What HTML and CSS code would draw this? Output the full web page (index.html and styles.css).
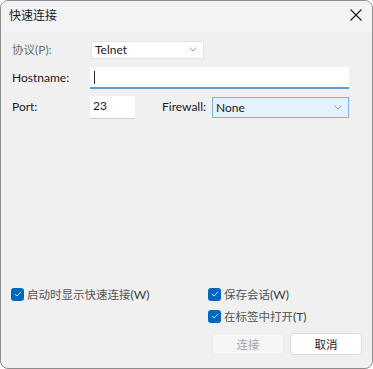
FILE: index.html
```html
<!DOCTYPE html>
<html>
<head>
<meta charset="utf-8">
<link rel="stylesheet" href="styles.css">
</head>
<body>
<div class="window">
  <div class="titlebar">
    <span class="title">快速连接</span>
    <svg class="close" width="12" height="12" viewBox="0 0 12 12"><path d="M0.5 0.5 L11.5 11.5 M11.5 0.5 L0.5 11.5" stroke="#1a1a1a" stroke-width="1.1" fill="none"/></svg>
  </div>
  <div class="body">
    <div class="row r1">
      <span class="label dim"><span class="cjk">协议</span>(P):</span>
      <div class="select proto"><span>Telnet</span><svg class="chev" width="8" height="5" viewBox="0 0 8 5"><path d="M0.5 0.5 L4 4 L7.5 0.5" stroke="#888" fill="none" stroke-width="0.8"/></svg></div>
    </div>
    <div class="row r2">
      <span class="label">Hostname:</span>
      <div class="input host"><span class="caret"></span></div>
    </div>
    <div class="row r3">
      <span class="label">Port:</span>
      <div class="input port">23</div>
      <span class="label fw">Firewall:</span>
      <div class="select fwsel"><span>None</span><svg class="chev" width="8" height="5" viewBox="0 0 8 5"><path d="M0.5 0.5 L4 4 L7.5 0.5" stroke="#888" fill="none" stroke-width="0.8"/></svg></div>
    </div>
    <div class="spacer"></div>
    <div class="checks">
      <div class="col left">
        <label class="check"><span class="box"><svg width="8" height="6" viewBox="0 0 8 6"><path d="M0.8 3 L3 5 L7.2 0.8" stroke="#cfe3f7" fill="none" stroke-width="1"/></svg></span><span class="cjk">启动时显示快速连接</span><span>(W)</span></label>
      </div>
      <div class="col right">
        <label class="check"><span class="box"><svg width="8" height="6" viewBox="0 0 8 6"><path d="M0.8 3 L3 5 L7.2 0.8" stroke="#cfe3f7" fill="none" stroke-width="1"/></svg></span><span class="cjk">保存会话</span><span>(W)</span></label>
        <label class="check"><span class="box"><svg width="8" height="6" viewBox="0 0 8 6"><path d="M0.8 3 L3 5 L7.2 0.8" stroke="#cfe3f7" fill="none" stroke-width="1"/></svg></span><span class="cjk">在标签中打开</span><span>(T)</span></label>
      </div>
    </div>
    <div class="buttons">
      <button class="btn disabled">连接</button>
      <button class="btn">取消</button>
    </div>
  </div>
</div>
</body>
</html>
```
FILE: styles.css
```css
html, body {
  margin: 0;
  padding: 0;
  background: #ffffff;
}
body {
  font-family: "Lato", "Noto Sans CJK SC", sans-serif;
  font-size: 12px;
  color: #1a1a1a;
}
.window {
  box-sizing: border-box;
  width: 373px;
  height: 369px;
  border: 1px solid #8c8c8c;
  border-radius: 8px;
  overflow: hidden;
  display: flex;
  flex-direction: column;
  background: #f0f0f0;
}
.titlebar {
  height: 31px;
  background: #f3f3f6;
  display: flex;
  align-items: center;
  justify-content: space-between;
  padding: 0 10px 0 8px;
  flex: none;
}
.title {
  font-family: "Noto Sans CJK SC", sans-serif;
  font-size: 12px;
  color: #1a1a1a;
  margin-top: -4px;
}
.close {
  margin-top: -4px;
}
.body {
  flex: 1;
  display: flex;
  flex-direction: column;
  padding: 9px 0 13px 0;
}
.row {
  display: flex;
  align-items: center;
}
.label {
  width: 76px;
  padding-left: 11px;
  flex: none;
  line-height: 16px;
}
.cjk {
  font-family: "Noto Sans CJK SC", sans-serif;
  font-size: 11.5px;
}
.dim {
  color: #6d6d6d;
}
.r1 { height: 17px; }
.r2 { height: 22px; margin-top: 9px; }
.r3 { height: 22px; margin-top: 7px; }
.select {
  box-sizing: border-box;
  display: flex;
  align-items: center;
  justify-content: space-between;
  background: #ffffff;
  border: 1px solid #e3e3e3;
  padding: 0 6px 0 3px;
}
.proto {
  width: 113px;
  height: 18px;
  margin-left: 3px;
}
.input {
  box-sizing: border-box;
  background: #ffffff;
  height: 22px;
  display: flex;
  align-items: center;
  padding-left: 3px;
}
.host {
  width: 259px;
  margin-left: 2px;
  border-bottom: 2px solid #5b9bd5;
}
.caret {
  width: 1px;
  height: 13px;
  background: #222;
  margin-left: 1px;
}
.port {
  width: 45px;
  margin-left: 2px;
  box-shadow: 0 1px 0 #d0d0d0;
  align-items: flex-start;
  padding-top: 2px;
}
.fw {
  width: auto;
  padding-left: 27px;
  margin-right: 6px;
}
.fwsel {
  width: 137px;
  height: 21px;
  background: #e5f1fb;
  border: 1px solid #7ab1e6;
  margin-top: 0;
}
.spacer { flex: 1; }
.checks {
  display: flex;
}
.col {
  display: flex;
  flex-direction: column;
  gap: 6px;
}
.left {
  width: 197px;
  padding-left: 10px;
}
.check {
  display: flex;
  align-items: center;
  height: 16px;
  color: #3a3a3a;
}
.check .cjk { color: #555; }
.box {
  box-sizing: border-box;
  width: 13px;
  height: 13px;
  border-radius: 3px;
  background: #0067c0;
  display: flex;
  align-items: center;
  justify-content: center;
  margin-right: 3px;
}
.buttons {
  display: flex;
  justify-content: flex-end;
  gap: 6px;
  padding-right: 10px;
  margin-top: 9px;
}
.btn {
  box-sizing: border-box;
  width: 72px;
  height: 22px;
  font-family: "Noto Sans CJK SC", sans-serif;
  font-size: 11.5px;
  background: #ffffff;
  border: 1px solid #dcdcdc;
  border-radius: 3px;
  color: #1a1a1a;
  padding: 0;
}
.btn.disabled {
  background: #f5f5f5;
  border-color: #ebebeb;
  color: #a5a5a5;
}
```
